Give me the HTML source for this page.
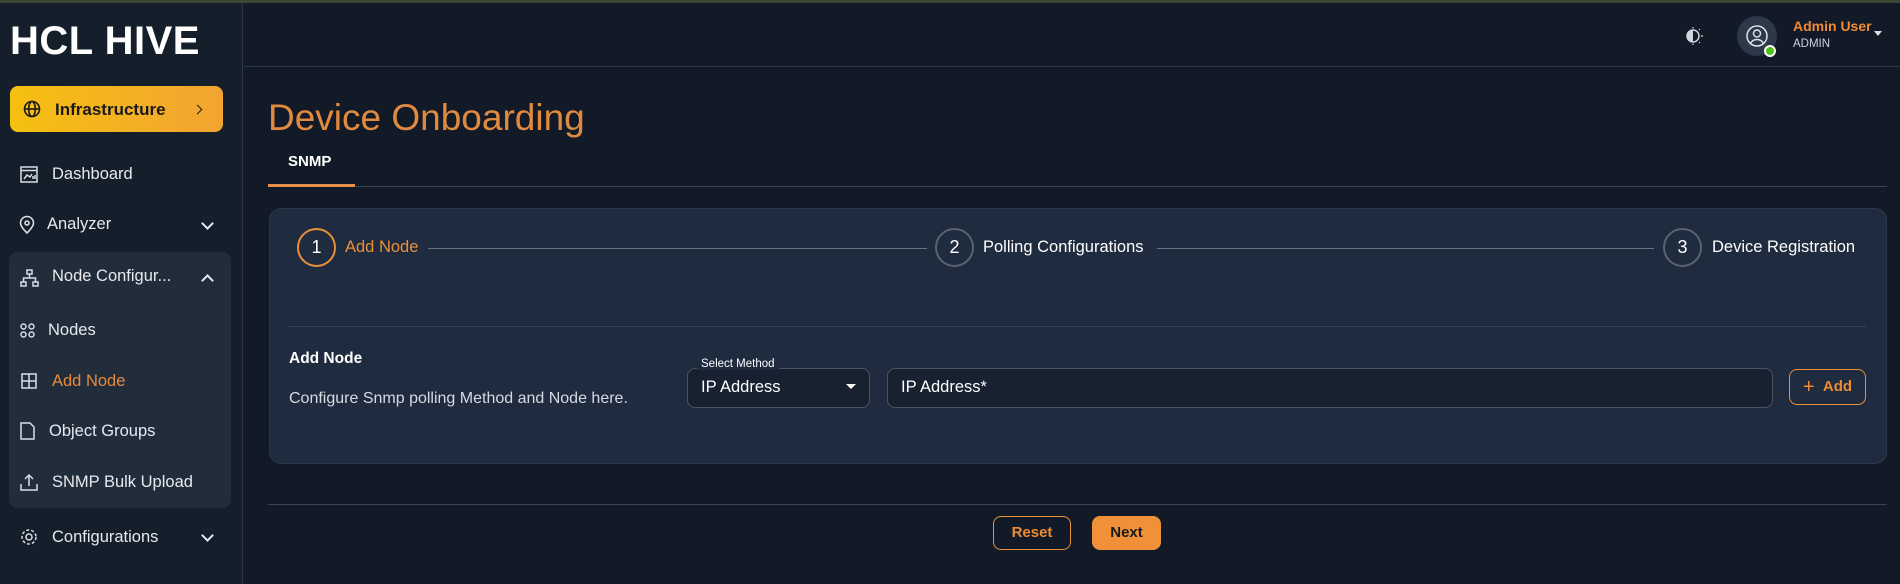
<!DOCTYPE html>
<html><head><meta charset="utf-8"><style>
*{box-sizing:border-box;margin:0;padding:0}
body{width:1900px;height:584px;overflow:hidden;background:#121a27;font-family:"Liberation Sans",sans-serif;color:#e6e9ee;position:relative}
.a{position:absolute}
.top{left:0;top:0;width:1900px;height:3px;background:#3c4734}
.side{left:0;top:3px;width:243px;height:581px;background:#151e2b;border-right:1px solid #2a3443}
.hdr{left:244px;top:66px;width:1656px;height:1px;background:#2e3848}
.logo{left:10px;top:19px;font-size:40px;font-weight:bold;color:#fff;letter-spacing:0.5px}
.inf{left:10px;top:86px;width:213px;height:46px;border-radius:8px;background:linear-gradient(90deg,#f5c010,#f2a431);color:#1a1a1a;font-weight:bold;font-size:17px}
.it{font-size:16.5px;color:#e6e9ee}
.grp{left:9px;top:252px;width:222px;height:256px;background:#222d3c;border-radius:8px}
.chev{width:9px;height:9px;border-right:2px solid #e6e9ee;border-bottom:2px solid #e6e9ee}
.title{left:268px;top:97px;font-size:37px;color:#e08a40;font-weight:normal}
.card{left:269px;top:208px;width:1618px;height:256px;background:#1f2b3e;border:1px solid #2b374a;border-radius:12px}
.circ{width:39px;height:39px;border-radius:50%;border:2px solid #5a6270;text-align:center;line-height:35px;font-size:18px;color:#fff}
.line{height:1px;background:#6b7280}
.box{border:1px solid #4a5362;border-radius:8px;background:#182130}
.btn{border-radius:8px;font-size:15px;font-weight:bold;text-align:center}
</style></head><body>
<div class="a top"></div>
<div class="a side"></div>
<div class="a hdr"></div>
<div class="a logo">HCL HIVE</div>
<div class="a inf">
 <svg class="a" style="left:13px;top:14px" width="18" height="18" viewBox="0 0 18 18" fill="none" stroke="#1a1a1a" stroke-width="1.6"><circle cx="9" cy="9" r="7.5"/><ellipse cx="9" cy="9" rx="3.3" ry="7.5"/><path d="M1.5 9h15"/></svg>
 <span class="a" style="left:45px;top:14px">Infrastructure</span>
 <div class="a" style="left:184px;top:20px;width:7px;height:7px;border-right:1.5px solid #1a1a1a;border-top:1.5px solid #1a1a1a;transform:rotate(45deg)"></div>
</div>
<div class="a grp"></div>
<svg class="a" style="left:20px;top:166px" width="18" height="17" viewBox="0 0 18 17" fill="none" stroke="#d9dde3" stroke-width="1.5"><rect x="1" y="1" width="16" height="15"/><path d="M1 4.5h16M4 13l3-4 3 2 2-3M13 13v-3M15 13v-4"/></svg>
<div class="a it" style="left:52px;top:165px">Dashboard</div>
<svg class="a" style="left:19px;top:215px" width="16" height="20" viewBox="0 0 16 20" fill="none" stroke="#d9dde3" stroke-width="1.6"><path d="M8 18c-4-4-6.5-7-6.5-10a6.5 6.5 0 0 1 13 0c0 3-2.5 6-6.5 10z"/><circle cx="8" cy="8" r="2"/></svg>
<div class="a it" style="left:47px;top:215px">Analyzer</div><div class="a chev" style="left:203px;top:219px;transform:rotate(45deg)"></div>
<svg class="a" style="left:20px;top:269px" width="19" height="18" viewBox="0 0 19 18" fill="none" stroke="#d9dde3" stroke-width="1.5"><rect x="7" y="1" width="5" height="4"/><rect x="1" y="13" width="5" height="4"/><rect x="13" y="13" width="5" height="4"/><path d="M9.5 5v4M3.5 13V9h12v4"/></svg>
<div class="a it" style="left:52px;top:267px">Node Configur...</div><div class="a chev" style="left:203px;top:276px;transform:rotate(-135deg)"></div>
<svg class="a" style="left:20px;top:323px" width="15" height="15" viewBox="0 0 15 15" fill="none" stroke="#d9dde3" stroke-width="1.5"><circle cx="3.5" cy="3.5" r="2.5"/><circle cx="11.5" cy="3.5" r="2.5"/><circle cx="3.5" cy="11.5" r="2.5"/><circle cx="11.5" cy="11.5" r="2.5"/></svg>
<div class="a it" style="left:48px;top:321px">Nodes</div>
<svg class="a" style="left:21px;top:373px" width="16" height="16" viewBox="0 0 16 16" fill="none" stroke="#d9dde3" stroke-width="1.5"><rect x="1" y="1" width="14" height="14"/><path d="M8 1v14M1 8h14"/></svg>
<div class="a it" style="left:52px;top:372px;color:#e48a3b">Add Node</div>
<svg class="a" style="left:20px;top:422px" width="15" height="18" viewBox="0 0 15 18" fill="none" stroke="#d9dde3" stroke-width="1.5"><path d="M1 1h9l4 4v12H1z"/></svg>
<div class="a it" style="left:49px;top:422px">Object Groups</div>
<svg class="a" style="left:20px;top:473px" width="18" height="18" viewBox="0 0 18 18" fill="none" stroke="#d9dde3" stroke-width="1.5"><path d="M1 11v6h16v-6M9 13V2M5 6l4-4 4 4"/></svg>
<div class="a it" style="left:52px;top:473px">SNMP Bulk Upload</div>
<svg class="a" style="left:20px;top:528px" width="18" height="18" viewBox="0 0 18 18" fill="none" stroke="#d9dde3" stroke-width="1.5"><circle cx="9" cy="9" r="3"/><circle cx="9" cy="9" r="7" stroke-dasharray="3 2"/></svg>
<div class="a it" style="left:52px;top:528px">Configurations</div><div class="a chev" style="left:203px;top:531px;transform:rotate(45deg)"></div>

<svg class="a" style="left:1684px;top:26px" width="20" height="20" viewBox="0 0 20 20"><circle cx="9" cy="10" r="6" fill="none" stroke="#d0d4da" stroke-width="1.5"/><path d="M9 4a6 6 0 0 0 0 12z" fill="#d0d4da"/><path d="M9 1v1.5M9 17.5V19M15 4l1-1M15 16l1 1M17 10h2" stroke="#d0d4da" stroke-width="1.2"/></svg>
<div class="a" style="left:1737px;top:16px;width:40px;height:40px;border-radius:50%;background:#2d3849"></div>
<svg class="a" style="left:1746px;top:25px" width="22" height="22" viewBox="0 0 22 22" fill="none" stroke="#e0e3e8" stroke-width="1.5"><circle cx="11" cy="11" r="10"/><circle cx="11" cy="8.5" r="3.5"/><path d="M4.5 18.5c1.5-3 4-4 6.5-4s5 1 6.5 4"/></svg>
<div class="a" style="left:1764px;top:45px;width:12px;height:12px;border-radius:50%;background:#4cc417;border:2px solid #fff"></div>
<div class="a" style="left:1793px;top:18px;font-size:14px;font-weight:bold;color:#f08b33">Admin User</div>
<div class="a" style="left:1793px;top:38px;font-size:11.5px;color:#cbd3df">ADMIN</div>
<div class="a" style="left:1874px;top:31px;border:4px solid transparent;border-top:5px solid #ddd"></div>

<div class="a title">Device Onboarding</div>
<div class="a" style="left:288px;top:153px;font-size:15px;font-weight:bold;color:#fff">SNMP</div>
<div class="a" style="left:268px;top:186px;width:1619px;height:1px;background:#3a4453"></div>
<div class="a" style="left:268px;top:184px;width:87px;height:3px;background:#e8914a"></div>

<div class="a card"></div>
<div class="a circ" style="left:297px;top:228px;border-color:#e8913a">1</div>
<div class="a" style="left:345px;top:238px;font-size:16.5px;color:#e8913a">Add Node</div>
<div class="a line" style="left:428px;top:248px;width:499px"></div>
<div class="a circ" style="left:935px;top:228px">2</div>
<div class="a" style="left:983px;top:238px;font-size:16.5px;color:#fff">Polling Configurations</div>
<div class="a line" style="left:1157px;top:248px;width:497px"></div>
<div class="a circ" style="left:1663px;top:228px">3</div>
<div class="a" style="left:1712px;top:238px;font-size:16.5px;color:#fff">Device Registration</div>
<div class="a" style="left:288px;top:326px;width:1578px;height:1px;background:#364254"></div>
<div class="a" style="left:289px;top:350px;font-size:15.5px;font-weight:bold;color:#fff">Add Node</div>
<div class="a" style="left:289px;top:390px;font-size:16px;color:#d5dae2">Configure Snmp polling Method and Node here.</div>
<div class="a box" style="left:687px;top:368px;width:183px;height:40px"></div>
<div class="a" style="left:697px;top:358px;font-size:11.5px;color:#fff;background:#1f2b3e;padding:0 4px">Select Method</div>
<div class="a" style="left:701px;top:378px;font-size:16.5px;color:#fff">IP Address</div>
<div class="a" style="left:846px;top:384px;border:5px solid transparent;border-top:5px solid #fff"></div>
<div class="a box" style="left:887px;top:368px;width:886px;height:40px"></div>
<div class="a" style="left:901px;top:378px;font-size:16.5px;color:#fff">IP Address*</div>
<div class="a btn" style="left:1789px;top:369px;width:77px;height:36px;border:1.5px solid #e8913a;color:#f08b33;line-height:33px;font-weight:normal;font-size:15px"><span style="font-size:20px;vertical-align:-2px">+</span>&nbsp; <b>Add</b></div>

<div class="a" style="left:268px;top:504px;width:1619px;height:1px;background:#3a4453"></div>
<div class="a btn" style="left:993px;top:516px;width:78px;height:34px;border:1.5px solid #e8913a;color:#f08b33;line-height:31px">Reset</div>
<div class="a btn" style="left:1092px;top:516px;width:69px;height:34px;background:#f0913a;color:#1a1a1a;line-height:34px">Next</div>
</body></html>
